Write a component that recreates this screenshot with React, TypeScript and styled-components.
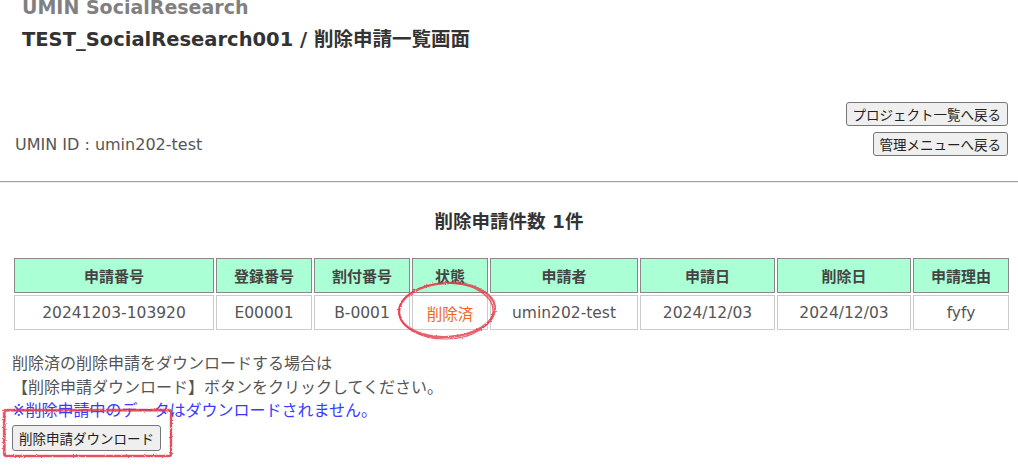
import React from "react";
import styled, { createGlobalStyle } from "styled-components";

const GlobalStyle = createGlobalStyle`
  html, body {
    margin: 0;
    padding: 0;
    background: #fff;
    overflow: hidden;
  }
  body {
    font-family: "DejaVu Sans", "Noto Sans CJK JP", sans-serif;
    color: #555;
  }
`;

const Page = styled.div`
  position: relative;
  width: 1018px;
  height: 470px;
`;

const Header = styled.header`
  padding: 0 22px;
`;

const SiteName = styled.div`
  margin-top: -5px;
  font-size: 19px;
  line-height: 24px;
  font-weight: bold;
  color: #808080;
`;

const PageTitle = styled.h1`
  margin: 9px 0 0;
  font-size: 19.5px;
  line-height: 24px;
  font-weight: bold;
  color: #333;
`;

const InfoBar = styled.div`
  display: flex;
  justify-content: space-between;
  align-items: flex-end;
  margin-top: 50px;
  padding: 0 10px 0 15px;
`;

const UserId = styled.div`
  font-size: 16px;
  line-height: 20px;
  padding-bottom: 1px;
`;

const NavButtons = styled.div`
  display: flex;
  flex-direction: column;
  align-items: flex-end;
  gap: 6px;
`;

const Button = styled.button`
  height: 24px;
  padding: 0 6px;
  font-family: "Noto Sans CJK JP", sans-serif;
  font-size: 13.5px;
  color: #222;
  background: #efefef;
  border: 1px solid #767676;
  border-radius: 3px;
`;

const Rule = styled.hr`
  margin: 25px 0 0;
  border: 0;
  border-top: 1px solid #a0a0a0;
  border-bottom: 1px solid #ececec;
`;

const Count = styled.h2`
  margin: 27px 0 0;
  text-align: center;
  font-size: 18.5px;
  line-height: 24px;
  font-weight: bold;
  color: #333;
`;

const Table = styled.table`
  margin: 22px 0 0 12px;
  width: 998px;
  border-collapse: separate;
  border-spacing: 2px;
  table-layout: fixed;
`;

const Th = styled.th<{ $w: number }>`
  box-sizing: border-box;
  width: ${({ $w }) => $w}px;
  height: 35px;
  padding: 0;
  background: #aaffd5;
  border: 1px solid #888;
  font-size: 15px;
  font-weight: bold;
  color: #444;
  text-align: center;
`;

const Td = styled.td<{ $status?: boolean }>`
  box-sizing: border-box;
  height: 35px;
  padding: 0;
  border: 1px solid #ccc;
  font-size: 15.5px;
  color: ${({ $status }) => ($status ? "#ee6a1e" : "#555")};
  text-align: center;
`;

const Notes = styled.div`
  margin: 20px 0 0 12px;
  font-size: 16px;
  line-height: 23.5px;
`;

const Warn = styled.div`
  color: #3a3aff;
`;

const DownloadButton = styled(Button)`
  margin: 2px 0 0 12px;
  height: 26px;
  width: 149px;
  font-size: 13.5px;
`;

const Mark = styled.svg`
  position: absolute;
  left: 0;
  top: 0;
  pointer-events: none;
`;

const columns = [
  { label: "申請番号", w: 200 },
  { label: "登録番号", w: 96 },
  { label: "割付番号", w: 96 },
  { label: "状態", w: 76 },
  { label: "申請者", w: 148 },
  { label: "申請日", w: 135 },
  { label: "削除日", w: 134 },
  { label: "申請理由", w: 96 },
];

const row = [
  "20241203-103920",
  "E00001",
  "B-0001",
  "削除済",
  "umin202-test",
  "2024/12/03",
  "2024/12/03",
  "fyfy",
];

export default function App() {
  return (
    <Page>
      <GlobalStyle />
      <Header>
        <SiteName>UMIN SocialResearch</SiteName>
        <PageTitle>TEST_SocialResearch001 / 削除申請一覧画面</PageTitle>
      </Header>
      <InfoBar>
        <UserId>UMIN ID : umin202-test</UserId>
        <NavButtons>
          <Button>プロジェクト一覧へ戻る</Button>
          <Button>管理メニューへ戻る</Button>
        </NavButtons>
      </InfoBar>
      <Rule />
      <Count>削除申請件数 1件</Count>
      <Table>
        <thead>
          <tr>
            {columns.map((c) => (
              <Th key={c.label} $w={c.w}>
                {c.label}
              </Th>
            ))}
          </tr>
        </thead>
        <tbody>
          <tr>
            {row.map((v, i) => (
              <Td key={i} $status={i === 3}>
                {v}
              </Td>
            ))}
          </tr>
        </tbody>
      </Table>
      <Notes>
        <div>削除済の削除申請をダウンロードする場合は</div>
        <div>【削除申請ダウンロード】ボタンをクリックしてください。</div>
        <Warn>※削除申請中のデータはダウンロードされません。</Warn>
      </Notes>
      <DownloadButton>削除申請ダウンロード</DownloadButton>

      {/* hand-drawn red annotations */}
      <Mark width="1018" height="470" viewBox="0 0 1018 470">
        <defs>
          <filter id="rough" x="-10%" y="-10%" width="120%" height="120%">
            <feTurbulence type="fractalNoise" baseFrequency="0.9" numOctaves="2" seed="3" />
            <feDisplacementMap in="SourceGraphic" scale="2.5" />
          </filter>
        </defs>
        <g filter="url(#rough)" fill="none" stroke="#e23a48" strokeOpacity="0.8">
          <ellipse cx="447" cy="315" rx="48" ry="27" strokeWidth="2.2" transform="rotate(-3 447 315)" />
          <ellipse cx="446" cy="316" rx="47" ry="28" strokeWidth="1.2" transform="rotate(-1 446 316)" />
          <rect x="4" y="415" width="167" height="46" rx="2" strokeWidth="2.4" />
          <rect x="5" y="416" width="166" height="45" rx="2" strokeWidth="1.2" />
        </g>
      </Mark>
    </Page>
  );
}
